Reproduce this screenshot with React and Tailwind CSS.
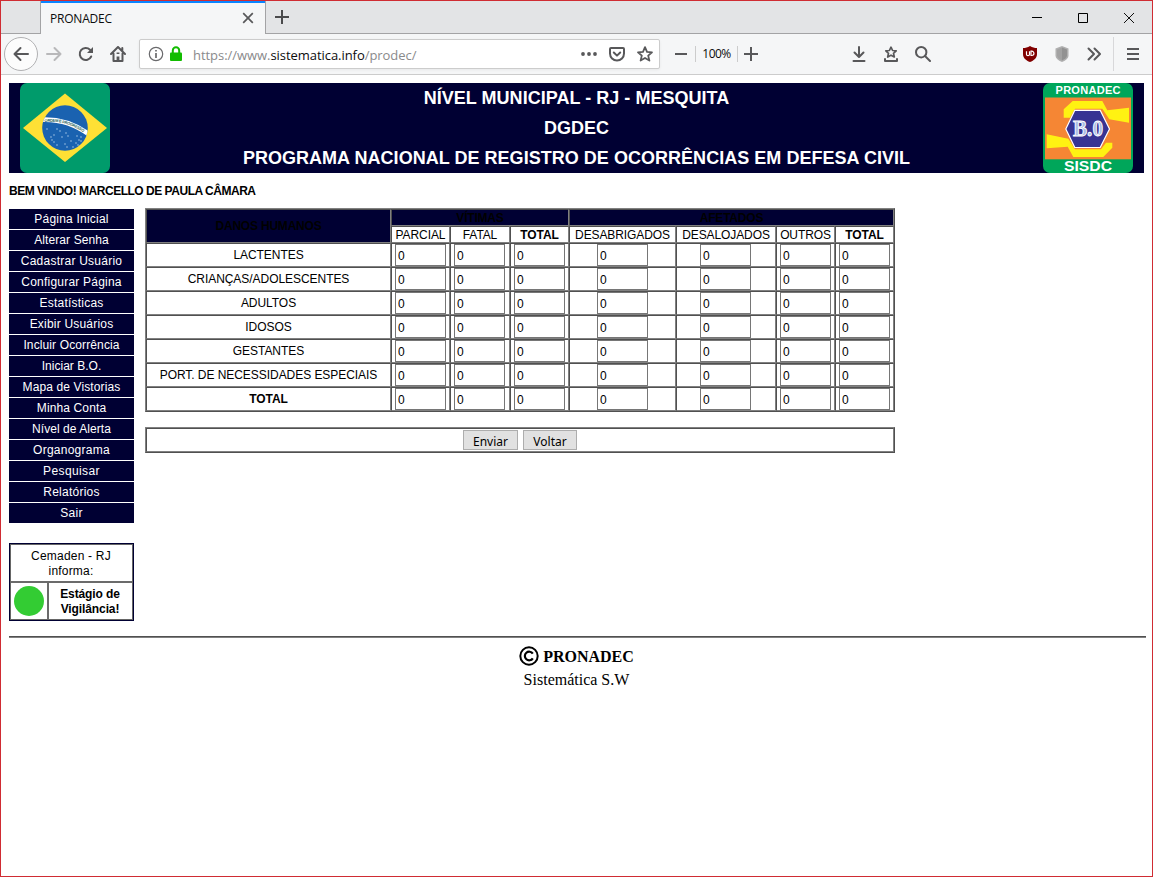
import React from "react";

const menu = [
  ["Página Inicial", "tracking-[0.22px]"],
  ["Alterar Senha", "tracking-[0.1px]"],
  ["Cadastrar Usuário", "tracking-[0.24px]"],
  ["Configurar Página", "tracking-[0.22px]"],
  ["Estatísticas", "tracking-[0.22px]"],
  ["Exibir Usuários", "tracking-[0.2px]"],
  ["Incluir Ocorrência", "tracking-[0.12px]"],
  ["Iniciar B.O.", "tracking-[0.02px]"],
  ["Mapa de Vistorias", "tracking-[0.12px]"],
  ["Minha Conta", "tracking-[0.12px]"],
  ["Nível de Alerta", "tracking-[0.05px]"],
  ["Organograma", "tracking-[0.25px]"],
  ["Pesquisar", "tracking-[0.4px]"],
  ["Relatórios", "tracking-[0.25px]"],
  ["Sair", "tracking-[0.3px]"],
];

const rows = [
  "LACTENTES",
  "CRIANÇAS/ADOLESCENTES",
  "ADULTOS",
  "IDOSOS",
  "GESTANTES",
  "PORT. DE NECESSIDADES ESPECIAIS",
  "TOTAL",
];

const columns = [
  { label: "PARCIAL", pad: "pl-[3px]" },
  { label: "FATAL", pad: "pl-[3px]" },
  { label: "TOTAL", pad: "pl-[3px]", bold: true },
  { label: "DESABRIGADOS", pad: "pl-[27px]" },
  { label: "DESALOJADOS", pad: "pl-[23px]" },
  { label: "OUTROS", pad: "pl-[3px]" },
  { label: "TOTAL", pad: "pl-[3px]", bold: true },
];

const cell =
  "border border-t-[#505050] border-l-[#505050] border-r-[#808080] border-b-[#808080] overflow-hidden whitespace-nowrap text-center";
const frame =
  "border border-t-[#808080] border-l-[#808080] border-r-[#505050] border-b-[#505050]";

function TabStrip() {
  return (
    <div className="flex h-[33px] bg-[#e3e4e6]">
      <div className="w-10 border-r border-b border-[#a3a3a5]" />
      <div className="flex w-[224px] items-center border-t-2 border-[#0a84ff] bg-[#f5f6f7] pl-[9px] pr-[11px]">
        <span className="flex-1 font-['Open_Sans',sans-serif] text-[12px] tracking-[-0.2px] text-[#0c0c0d]">PRONADEC</span>
        <svg className="mb-px" width="12" height="12" viewBox="0 0 12 12" stroke="#58585a" strokeWidth="1.7">
          <path d="M1.2 1.2l9.6 9.6M10.8 1.2L1.2 10.8" />
        </svg>
      </div>
      <div className="flex flex-1 justify-between border-b border-l border-[#a3a3a5]">
        <svg className="mt-[9px] ml-[8px]" width="15" height="15" viewBox="0 0 15 15" stroke="#4a4a4c" strokeWidth="2">
          <path d="M8 0v14M1 7h14" />
        </svg>
        <div className="mt-[12px] mr-[18px] flex gap-[36px]">
          <svg width="10" height="10" viewBox="0 0 10 10" stroke="#000">
            <path d="M0 4.5h10" />
          </svg>
          <svg width="10" height="10" viewBox="0 0 10 10" fill="none" stroke="#000">
            <path d="M.5 .5h9v9h-9z" />
          </svg>
          <svg width="10" height="10" viewBox="0 0 10 10" stroke="#111">
            <path d="M0 0l10 10M10 0L0 10" />
          </svg>
        </div>
      </div>
    </div>
  );
}

const lineIcon = { fill: "none", stroke: "#58585a", strokeWidth: 2, strokeLinecap: "round", strokeLinejoin: "round" };

function Toolbar() {
  return (
    <div className="flex h-[41px] items-center border-b border-[#ccc] bg-[#f5f6f7]">
      <div className="ml-[3px] flex h-[34px] w-[34px] shrink-0 items-center justify-center rounded-full border border-[#b1b1b3] bg-[#fcfcfc]">
        <svg width="16" height="16" viewBox="0 0 16 16" {...lineIcon}>
          <path d="M15 8H1.5M7.5 2L1.5 8l6 6" />
        </svg>
      </div>
      <svg className="ml-[8px] shrink-0" width="16" height="16" viewBox="0 0 16 16" {...lineIcon} stroke="#b8b8ba">
        <path d="M1 8h13.5M8.500 2l6 6-6 6" />
      </svg>
      <svg className="ml-[16px] shrink-0" width="16" height="16" viewBox="0 0 16 16" {...lineIcon}>
        <path d="M13.200 10.500A6 6 0 1 1 12 3.700" />
        <path d="M15 1v6H9z" fill="#58585a" stroke="none" />
      </svg>
      <svg className="ml-[16px] shrink-0" width="16" height="16" viewBox="0 0 16 16" {...lineIcon}>
        <path d="M1 8l7-7 7 7M3.500 7.500V15h9V7.500M12.300 2v3" />
        <path d="M8 15v-4.500M8 6.500v1.500" strokeWidth="2.800" strokeLinecap="butt" />
      </svg>
      <div className="ml-[13px] flex h-[30px] w-[521px] shrink-0 items-center rounded-[2px] border border-[#ccc] bg-white shadow-[0_1px_3px_rgba(0,0,0,0.06)]">
        <svg className="ml-[8px]" width="16" height="16" viewBox="0 0 16 16" fill="none" stroke="#6a6a6c">
          <circle cx="8" cy="8" r="6.700" strokeWidth="1.200" />
          <path d="M8 7v5M8 4v1.600" strokeWidth="1.700" />
        </svg>
        <svg className="ml-[6px]" width="12" height="16" viewBox="0 0 12 16">
          <path d="M2.800 7V4.500a3.200 3.200 0 0 1 6.400 0V7" fill="none" stroke="#12bc00" strokeWidth="2" />
          <rect x="0" y="6.500" width="12" height="8.500" rx="1" fill="#12bc00" />
        </svg>
        <div className="ml-[11px] flex-1 pt-[3px] whitespace-nowrap font-['Open_Sans',sans-serif] text-[13px] tracking-[-0.05px] text-[#8a8a8c]">
          https://www.<span className="text-[#0c0c0d]">sistematica.info</span>/prodec/
        </div>
        <svg width="16" height="16" viewBox="0 0 16 16" fill="#58585a">
          <circle cx="2" cy="8" r="1.900" /><circle cx="8" cy="8" r="1.900" /><circle cx="14" cy="8" r="1.900" />
        </svg>
        <svg className="ml-[12px]" width="16" height="16" viewBox="0 0 16 16" {...lineIcon}>
          <path d="M2 2h12a1 1 0 0 1 1 1v4.500a7 7 0 0 1-14 0V3a1 1 0 0 1 1-1z" />
          <path d="M4.800 6.500L8 9.600l3.200-3.100" />
        </svg>
        <svg className="ml-[12px] mr-[6px]" width="16" height="16" viewBox="0 0 16 16" {...lineIcon} strokeWidth="1.800">
          <path d="M8 1.200l2 4.700 5 .4-3.800 3.300 1.200 5L8 12l-4.400 2.600 1.200-5L1 6.300l5-.4z" />
        </svg>
      </div>
      <svg className="ml-[15px] shrink-0" width="12" height="16" viewBox="0 0 12 16" stroke="#58585a" strokeWidth="2">
        <path d="M0 8h12" />
      </svg>
      <div className="ml-[8px] h-4 w-px shrink-0 bg-[#ccc]" />
      <span className="w-[41px] shrink-0 whitespace-nowrap text-center font-['Open_Sans',sans-serif] text-[12px] tracking-[-0.55px] text-[#0c0c0d]">100%</span>
      <div className="h-4 w-px shrink-0 bg-[#ccc]" />
      <svg className="ml-[6px] shrink-0" width="14" height="14" viewBox="0 0 14 14" stroke="#58585a" strokeWidth="2">
        <path d="M0 7h14M7 0v14" />
      </svg>
      <svg className="ml-[93px] shrink-0" width="16" height="16" viewBox="0 0 16 16" {...lineIcon}>
        <path d="M8 1v9.500M3.500 6.500L8 11l4.500-4.500M2.500 15h11" />
      </svg>
      <svg className="ml-[16px] shrink-0" width="16" height="16" viewBox="0 0 16 16" {...lineIcon}>
        <path d="M2 13V15h12V13" />
        <path d="M8 1.200l1.600 3.300 3.600.4-2.700 2.400.8 3.700L8 9.200 4.700 11l.8-3.700-2.700-2.400 3.600-.4z" strokeWidth="1.700" />
      </svg>
      <svg className="ml-[16px] shrink-0" width="16" height="16" viewBox="0 0 16 16" {...lineIcon}>
        <circle cx="6.200" cy="6.200" r="5.200" />
        <path d="M10 10l5 5" />
      </svg>
      <div className="ml-auto flex items-center">
        <svg width="16" height="16" viewBox="0 0 16 16">
          <path d="M8 0c2.500 1.500 4.500 2 7 2v6c0 4-3 6.500-7 8-4-1.500-7-4-7-8V2c2.500 0 4.500-.5 7-2z" fill="#800000" />
          <path d="M4.500 5.200v3a1.500 1.500 0 0 0 3 0v-3M9 5.200v4.300h.8a2.100 2.100 0 0 0 0-4.300z" fill="none" stroke="#fff" strokeWidth="1.200" />
        </svg>
        <svg className="ml-[16px]" width="16" height="16" viewBox="0 0 16 16">
          <path d="M8 0l6.500 2.500v7C14.500 12.500 11 15 8 16c-3-1-6.500-3.500-6.500-6.500v-7z" fill="#b0b0b0" />
          <path d="M8 1.500l5 2v6c0 2-2.500 4-5 5z" fill="#929292" />
          <path d="M8 1.500l-5 2v6c0 2 2.500 4 5 5z" fill="#a2a2a2" />
        </svg>
        <svg className="ml-[16px]" width="16" height="16" viewBox="0 0 16 16" {...lineIcon}>
          <path d="M2.500 2.500L8 8l-5.500 5.500M8.500 2.500L14 8l-5.500 5.500" />
        </svg>
        <div className="ml-[11px] h-[34px] w-px bg-[#d8d8da]" />
        <svg className="ml-[11px] mr-[11px]" width="16" height="16" viewBox="0 0 16 16" {...lineIcon} strokeLinecap="butt">
          <path d="M2 3h12M2 8h12M2 13h12" />
        </svg>
      </div>
    </div>
  );
}

function Flag() {
  return (
    <svg width="90" height="90" viewBox="0 0 90 90">
      <defs>
        <clipPath id="globe"><circle cx="45" cy="45" r="22.800" /></clipPath>
        <path id="motto" d="M24.500 38.900Q47 37 65.500 50.900" />
      </defs>
      <rect width="90" height="90" rx="7" fill="#009b6b" />
      <path d="M45 10.500L87 45 45 79 3 45z" fill="#fee035" />
      <circle cx="45" cy="45" r="22.800" fill="#1a62b0" />
      <path d="M20 36.800Q47 35 70 52" fill="none" stroke="#fff" strokeWidth="4.800" clipPath="url(#globe)" />
      <text fontFamily="Liberation Sans, sans-serif" fontSize="4" fontWeight="700" fill="#2b665c">
        <textPath href="#motto" textLength="41">ORDEM E PROGRESSO</textPath>
      </text>
      <g fill="#b9d4ee">
        {[[27,46],[31,54],[34,52],[37,46],[46,50],[48,53],[42,54],[51,58],[45,61],[47,64],[34,59],[37,62],[56,60],[59,57],[61,54],[58,62],[53,64],[32,57],[40,48],[57,53],[61,58]].map(([x, y]) => (
          <circle key={`${x}-${y}`} cx={x} cy={y} r=".7" />
        ))}
      </g>
    </svg>
  );
}

function Emblem() {
  return (
    <svg width="90" height="90" viewBox="0 0 90 90" overflow="visible" fontFamily="Liberation Sans, sans-serif" fontWeight="700">
      <rect width="90" height="90" rx="7" fill="#00a65a" />
      <rect x="2" y="14.500" width="86" height="61.800" fill="#f58634" />
      <path d="M20.700 34.700V26.300L29.700 18H59.300L64.300 27.300 86 24.700V39.700L66.300 36.300 59.300 25.700H32L27 34.700z" fill="#fff212" />
      <path d="M3.700 51.300L25.300 55.700 32 66.300H58L63 59.700H69.300V64.700L60.300 74H30.300L24.700 63.700 3.700 65.300z" fill="#fff212" />
      <path d="M31.800 27.300H57.200L66.500 45.900 57.200 64.500H31.800L22.800 45.900z" fill="#373493" stroke="#fff" strokeWidth="1.200" />
      <text x="45" y="53.300" textAnchor="middle" textLength="30" lengthAdjust="spacingAndGlyphs" fontFamily="Liberation Serif, serif" fontSize="22.500" fill="#a9bce4" stroke="#fff" strokeWidth=".9">B.0</text>
      <text x="45" y="11.300" textAnchor="middle" textLength="65" fontSize="11" fill="#fff">PRONADEC</text>
      <text x="45" y="88.300" textAnchor="middle" textLength="48" lengthAdjust="spacingAndGlyphs" fontSize="14.500" fill="#fff">SISDC</text>
    </svg>
  );
}

function Sidebar() {
  return (
    <aside className="w-[125px]">
      <nav className="flex flex-col gap-px">
        {menu.map(([label, spacing]) => (
          <a key={label} className={`block h-5 bg-[#000033] text-center text-[12px] leading-5 text-white ${spacing}`}>
            {label}
          </a>
        ))}
      </nav>
      <div className="mt-5 h-[78px] border border-[#000033] text-center text-[12px] leading-[15px]">
        <div className="h-full border border-[#666]">
          <div className="h-[36px] pt-[4px] pr-px tracking-[0.2px]">Cemaden - RJ<br />informa:</div>
          <div className="flex h-[38px] border-t-2 border-[#6b6b6b]">
            <div className="flex w-[38px] items-center justify-center border-r-2 border-[#6b6b6b]">
              <div className="h-[30px] w-[30px] shrink-0 rounded-full bg-[#33cc33]" />
            </div>
            <div className="flex-1 pt-[4px] pr-px font-bold tracking-[-0.1px]">Estágio de<br />Vigilância!</div>
          </div>
        </div>
      </div>
    </aside>
  );
}

function DamageTable() {
  return (
    <div className={`grid w-[750px] grid-cols-[245px_59px_60px_59px_107px_100px_59px_59px] grid-rows-[17px_17px_repeat(7,24px)] text-[12px] ${frame}`}>
      <div className={`${cell} row-span-2 bg-[#000033] font-bold leading-8 tracking-[-0.2px]`}>DANOS HUMANOS</div>
      <div className={`${cell} col-span-3 bg-[#000033] font-bold leading-[17px] tracking-[-0.2px]`}>VÍTIMAS</div>
      <div className={`${cell} col-span-4 bg-[#000033] font-bold leading-[17px] tracking-[-0.2px]`}>AFETADOS</div>
      {columns.map((c, i) => (
        <div key={i} className={`${cell} leading-[17px] tracking-[-0.1px] ${c.bold ? "font-bold" : ""}`}>{c.label}</div>
      ))}
      {rows.map((label) => (
        <React.Fragment key={label}>
          <div className={`${cell} leading-[23px] tracking-[-0.05px] ${label === "TOTAL" ? "font-bold" : ""}`}>{label}</div>
          {columns.map((c, i) => (
            <div key={i} className={`${cell} ${c.pad}`}>
              <input className="block h-[22px] w-[51px] border border-[#767676] bg-white px-[2px] pt-px text-[12px]" defaultValue="0" />
            </div>
          ))}
        </React.Fragment>
      ))}
    </div>
  );
}

export default function App() {
  return (
    <div className="flex h-[877px] w-[1153px] flex-col overflow-hidden border border-[#d02c33] bg-white font-['Liberation_Sans',Arial,sans-serif] text-black">
      <TabStrip />
      <Toolbar />
      <header className="mt-2 ml-2 flex h-[90px] w-[1135px] shrink-0 justify-between bg-[#000033] pr-[11px] pl-[11px]">
        <Flag />
        <h1 className="text-center text-[18px] leading-[30px] font-bold tracking-[0.03px] text-white">
          NÍVEL MUNICIPAL - RJ - MESQUITA<br />DGDEC<br />PROGRAMA NACIONAL DE REGISTRO DE OCORRÊNCIAS EM DEFESA CIVIL
        </h1>
        <Emblem />
      </header>
      <p className="ml-2 h-[35px] pt-[11px] text-[12px] leading-[15px] font-bold tracking-[-0.48px]">BEM VINDO! MARCELLO DE PAULA CÂMARA</p>
      <main className="ml-2 flex gap-[11px]">
        <div className="pt-px">
          <Sidebar />
        </div>
        <div>
          <DamageTable />
          <div className={`mt-[15px] h-[26px] w-[750px] ${frame}`}>
            <div className={`${cell} flex h-full items-center justify-center gap-[5px]`}>
              <button className="h-5 w-[55px] border border-[#adadad] bg-[#e1e1e1] pt-[2px] font-['Noto_Sans',sans-serif] text-[12px] leading-[18px]">Enviar</button>
              <button className="h-5 w-[54px] border border-[#adadad] bg-[#e1e1e1] pt-[2px] font-['Noto_Sans',sans-serif] text-[12px] leading-[18px]">Voltar</button>
            </div>
          </div>
        </div>
      </main>
      <hr className="mt-[15px] ml-2 h-[2px] w-[1137px] shrink-0 border-t border-b border-t-[#505050] border-b-[#808080]" />
      <footer className="mt-[7px] text-center font-['Liberation_Serif',serif] text-[16px] leading-[24px]">
        <div className="flex items-center justify-center gap-[4px] font-bold">
          <svg className="mb-[2px]" width="20" height="20" viewBox="0 0 20 20" fill="none" stroke="#000">
            <circle cx="10" cy="10" r="8.700" strokeWidth="2" />
            <path d="M13.800 7.700a4.300 4.300 0 1 0 0 4.600" strokeWidth="2.200" />
          </svg>
          PRONADEC
        </div>
        <div className="leading-[22px]">Sistemática S.W</div>
      </footer>
    </div>
  );
}
